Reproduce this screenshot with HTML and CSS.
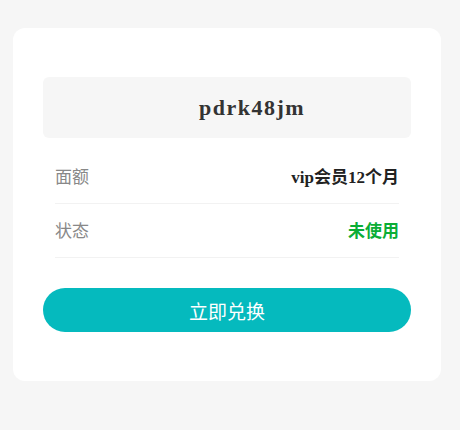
FILE: index.html
```html
<!DOCTYPE html>
<html lang="zh">
<head>
<meta charset="utf-8">
<link rel="stylesheet" href="styles.css">
</head>
<body>
<div class="card">
  <div class="code"><span class="code-text">pdrk48jm</span></div>
  <div class="rows">
    <div class="row"><span class="label">面额</span><span class="value">vip会员12个月</span></div>
    <div class="row"><span class="label">状态</span><span class="value green">未使用</span></div>
  </div>
  <div class="btn">立即兑换</div>
</div>
</body>
</html>
```
FILE: styles.css
```css
html, body {
  margin: 0;
  padding: 0;
  background: #f6f6f6;
  font-family: "Liberation Serif", "Noto Sans CJK SC", serif;
}
body {
  padding: 28px 0 0 13px;
}
.card {
  width: 428px;
  box-sizing: border-box;
  background: #fff;
  border-radius: 12px;
  padding: 49px 30px 49px 30px;
}
.code {
  height: 61px;
  background: #f6f6f6;
  border-radius: 6px;
  display: flex;
  align-items: center;
  justify-content: center;
  padding-left: 50px;
}
.code-text {
  font-size: 22px;
  font-weight: bold;
  letter-spacing: 1.5px;
  color: #333;
}
.rows {
  margin: 12px 12px 0 12px;
}
.row {
  height: 50px;
  padding-bottom: 3px;
  border-bottom: 1px solid #f2f2f2;
  display: flex;
  align-items: center;
  justify-content: space-between;
  font-size: 17px;
}
.label {
  color: #888;
}
.value {
  font-weight: bold;
  color: #222;
}
.green {
  color: #0aad36;
}
.btn {
  margin-top: 30px;
  height: 44px;
  border-radius: 22px;
  background: #05babe;
  color: #fff;
  font-size: 19px;
  display: flex;
  align-items: center;
  justify-content: center;
}
```
